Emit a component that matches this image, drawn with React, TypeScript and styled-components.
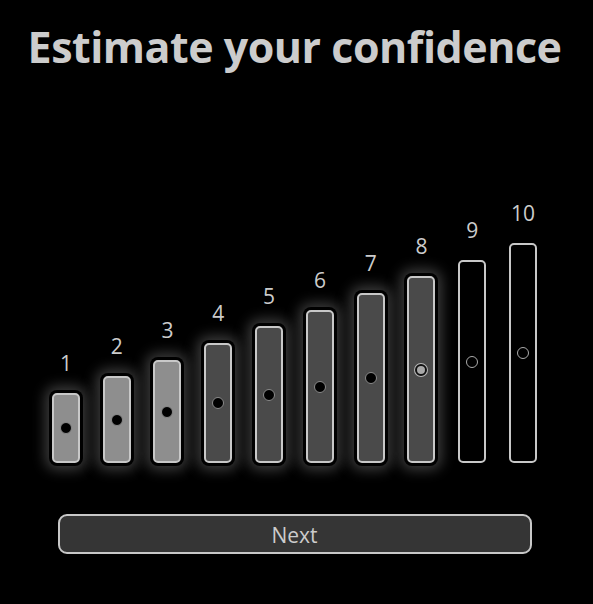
import React from "react";
import styled, { createGlobalStyle, css } from "styled-components";

const Global = createGlobalStyle`
  html, body { margin: 0; padding: 0; background: #000; }
  body { font-family: "Open Sans", "DejaVu Sans", sans-serif; color: #cccccc; }
`;

const Page = styled.div`
  width: 589px;
  display: flex;
  flex-direction: column;
  align-items: center;
`;

const Title = styled.h1`
  margin: 17px 0 0;
  font-size: 43px;
  line-height: 60px;
  font-weight: 700;
  color: #cccccc;
  letter-spacing: -0.5px;
`;

const Chart = styled.div`
  width: 508px;
  height: 270px;
  margin-top: 116px;
  display: grid;
  grid-template-columns: repeat(10, 1fr);
  align-items: end;
`;

const Column = styled.div`
  display: flex;
  flex-direction: column;
  align-items: center;
`;

const Label = styled.div`
  font-size: 21px;
  line-height: 26px;
  margin-bottom: 17px;
  color: #cccccc;
`;

type Tone = "light" | "dark" | "empty";

const fills: Record<Tone, string> = {
  light: "#8e8e8e",
  dark: "#4a4a4a",
  empty: "#000000",
};

const Bar = styled.div<{ $tone: Tone; $h: number }>`
  box-sizing: border-box;
  width: 28px;
  height: ${(p) => p.$h}px;
  border: 2px solid #c8c8c8;
  border-radius: 5px;
  background: ${(p) => fills[p.$tone]};
  display: flex;
  align-items: center;
  justify-content: center;
  ${(p) =>
    p.$tone !== "empty" &&
    css`
      box-shadow: 0 0 0 3px #000, 0 0 13px 7px #3c3c3c;
    `}
`;

type DotKind = "solid" | "selected" | "hollow";

const Dot = styled.div<{ $kind: DotKind }>`
  box-sizing: border-box;
  width: 12px;
  height: 12px;
  border-radius: 50%;
  ${(p) =>
    p.$kind === "solid"
      ? css`
          background: #000;
          border: 1px solid #8a8a8a;
        `
      : p.$kind === "selected"
      ? css`
          background: #a8a8a8;
          border: 2px solid #111;
          box-shadow: 0 0 0 1px #b8b8b8;
        `
      : css`
          background: transparent;
          border: 1px solid #aaaaaa;
        `}
`;

const NextButton = styled.button`
  box-sizing: border-box;
  width: 474px;
  height: 40px;
  margin-top: 51px;
  padding-top: 2px;
  background: #353535;
  border: 2px solid #c8c8c8;
  border-radius: 9px;
  color: #cccccc;
  font-family: "Open Sans", "DejaVu Sans", sans-serif;
  font-size: 21px;
  cursor: pointer;
`;

const steps = Array.from({ length: 10 }, (_, i) => i + 1);

function toneFor(n: number): Tone {
  if (n <= 3) return "light";
  if (n <= 8) return "dark";
  return "empty";
}

function dotFor(n: number): DotKind {
  if (n <= 7) return "solid";
  if (n === 8) return "selected";
  return "hollow";
}

export default function App() {
  return (
    <>
      <Global />
      <Page>
        <Title>Estimate your confidence</Title>
        <Chart>
          {steps.map((n) => (
            <Column key={n}>
              <Label>{n}</Label>
              <Bar $tone={toneFor(n)} $h={Math.round(70 + ((n - 1) * 150) / 9)}>
                <Dot $kind={dotFor(n)} />
              </Bar>
            </Column>
          ))}
        </Chart>
        <NextButton>Next</NextButton>
      </Page>
    </>
  );
}
